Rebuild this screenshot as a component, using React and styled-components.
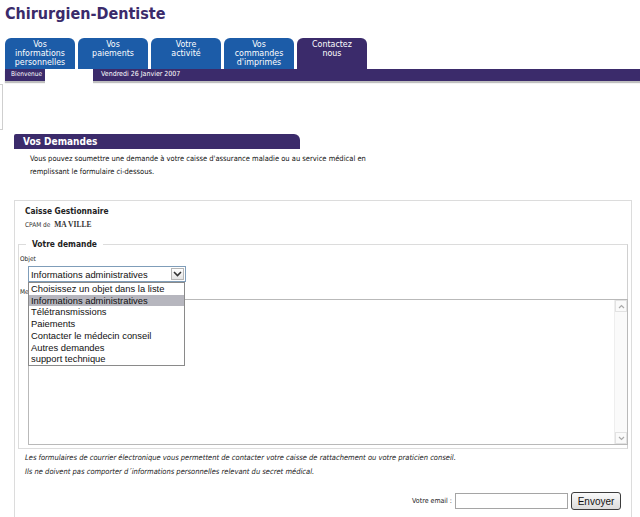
import React from "react";
import styled, { createGlobalStyle } from "styled-components";

const GlobalStyle = createGlobalStyle`
  html, body {
    margin: 0;
    padding: 0;
    background: #ffffff;
  }
  body {
    font-family: "DejaVu Sans Condensed", "DejaVu Sans", sans-serif;
    color: #222;
  }
`;

const tabs = [
  { label: ["Vos", "informations", "personnelles"], color: "#1c5ca8" },
  { label: ["Vos", "paiements"], color: "#1c5ca8" },
  { label: ["Votre", "activité"], color: "#1c5ca8" },
  { label: ["Vos", "commandes", "d'imprimés"], color: "#1c5ca8" },
  { label: ["Contactez", "nous"], color: "#3b2b6b" },
];

const options = [
  "Choisissez un objet dans la liste",
  "Informations administratives",
  "Télétransmissions",
  "Paiements",
  "Contacter le médecin conseil",
  "Autres demandes",
  "support technique",
];

const App = () => {
  return (
    <Page>
      <GlobalStyle />
      <Title>Chirurgien-Dentiste</Title>
      <TabRow>
        {tabs.map((tab, index) => (
          <Tab key={index} color={tab.color}>
            {tab.label.map((line, i) => (
              <span key={i}>{line}</span>
            ))}
          </Tab>
        ))}
      </TabRow>
      <NavBar>
        <Welcome>Bienvenue</Welcome>
        <WhiteSlot />
        <DateText>Vendredi 26 Janvier 2007</DateText>
      </NavBar>
      <SideBox />
      <Section>
        <SectionHeader>Vos Demandes</SectionHeader>
        <Intro>
          Vous pouvez soumettre une demande à votre caisse d'assurance maladie
          ou au service médical en
          <br />
          remplissant le formulaire ci-dessous.
        </Intro>
        <FormBox>
          <BoxTitle>Caisse Gestionnaire</BoxTitle>
          <Cpam>
            CPAM de <City>MA VILLE</City>
          </Cpam>
          <Fieldset>
            <Legend>Votre demande</Legend>
            <FieldLabel>Objet</FieldLabel>
            <SelectWrap>
              <SelectBox>
                <SelectValue>Informations administratives</SelectValue>
                <SelectArrow>
                  <svg width="9" height="6" viewBox="0 0 9 6">
                    <path
                      d="M1 1 L4.5 4.5 L8 1"
                      fill="none"
                      stroke="#333"
                      strokeWidth="1.6"
                    />
                  </svg>
                </SelectArrow>
              </SelectBox>
              <OptionList>
                {options.map((opt, i) => (
                  <OptionItem key={i} selected={i === 1}>
                    {opt}
                  </OptionItem>
                ))}
              </OptionList>
            </SelectWrap>
            <FieldLabel tight>Message</FieldLabel>
            <MessageArea>
              <ScrollTrack>
                <ScrollButton>
                  <svg width="7" height="5" viewBox="0 0 7 5">
                    <path d="M1 4 L3.5 1.5 L6 4" fill="none" stroke="#aaa" strokeWidth="1.2" />
                  </svg>
                </ScrollButton>
                <ScrollButton>
                  <svg width="7" height="5" viewBox="0 0 7 5">
                    <path d="M1 1 L3.5 3.5 L6 1" fill="none" stroke="#aaa" strokeWidth="1.2" />
                  </svg>
                </ScrollButton>
              </ScrollTrack>
            </MessageArea>
          </Fieldset>
          <Note>
            Les formulaires de courrier électronique vous permettent de
            contacter votre caisse de rattachement ou votre praticien conseil.
          </Note>
          <Note>
            Ils ne doivent pas comporter d´informations personnelles relevant
            du secret médical.
          </Note>
          <EmailRow>
            <EmailLabel>Votre email :</EmailLabel>
            <EmailInput />
            <SendButton>Envoyer</SendButton>
          </EmailRow>
        </FormBox>
      </Section>
    </Page>
  );
};

export default App;

const Page = styled.div`
  width: 640px;
  height: 517px;
  overflow: hidden;
  position: relative;
`;

const Title = styled.h1`
  margin: 0;
  padding: 4px 0 0 5px;
  height: 34px;
  box-sizing: border-box;
  font-family: "DejaVu Sans Condensed", "DejaVu Sans", sans-serif;
  font-size: 16px;
  font-weight: bold;
  color: #3b2b6b;
`;

const TabRow = styled.div`
  display: flex;
  gap: 3px;
  padding-left: 5px;
  margin-top: 4px;
`;

const Tab = styled.div`
  width: 70px;
  height: 31px;
  box-sizing: border-box;
  background: ${(p) => p.color};
  border-radius: 6px 6px 0 0;
  color: #ffffff;
  font-size: 8.8px;
  line-height: 9px;
  display: flex;
  flex-direction: column;
  align-items: center;
  padding-top: 2px;
  span {
    display: block;
    height: 9px;
  }
`;

const NavBar = styled.div`
  margin-left: 5px;
  height: 12px;
  background: #3b2b6b;
  display: flex;
  align-items: flex-start;
  box-shadow: 0 2px 1px rgba(0, 0, 0, 0.25);
  position: relative;
  z-index: 1;
`;

const Welcome = styled.div`
  margin-left: 6px;
  width: 34px;
  height: 11px;
  font-size: 6.5px;
  line-height: 11px;
  color: #ffffff;
`;

const WhiteSlot = styled.div`
  width: 48px;
  height: 15px;
  background: #ffffff;
`;

const DateText = styled.div`
  margin-left: 8px;
  font-size: 7px;
  line-height: 11px;
  color: #ffffff;
`;

const SideBox = styled.div`
  width: 2px;
  height: 44px;
  margin-top: 3px;
  border: 1px solid #cfcfcf;
  border-left: none;
`;

const Section = styled.div`
  margin-left: 14px;
  margin-top: 4px;
`;

const SectionHeader = styled.div`
  width: 286px;
  height: 15px;
  box-sizing: border-box;
  background: #3b2b6b;
  border-radius: 2px 6px 0 0;
  color: #ffffff;
  font-weight: bold;
  font-size: 10px;
  line-height: 15px;
  padding-left: 9px;
`;

const Intro = styled.p`
  margin: 3px 0 0 16px;
  font-size: 7.5px;
  line-height: 13px;
  color: #111;
`;

const FormBox = styled.div`
  margin-top: 22px;
  width: 618px;
  height: 340px;
  box-sizing: border-box;
  border: 1px solid #dcdcdc;
  padding: 4px 3px 0 3px;
`;

const BoxTitle = styled.div`
  padding-left: 7px;
  font-size: 8.3px;
  line-height: 12px;
  font-weight: bold;
  color: #222;
`;

const Cpam = styled.div`
  padding-left: 7px;
  margin-top: 2px;
  font-size: 6.5px;
  line-height: 12px;
  color: #333;
`;

const City = styled.span`
  font-family: "Liberation Serif", serif;
  font-weight: bold;
  font-size: 7.5px;
  font-variant: small-caps;
  margin-left: 2px;
`;

const Fieldset = styled.fieldset`
  margin: 8px 0 0 0;
  padding: 2px 0 3px 1px;
  border: 1px solid #dcdcdc;
  border-right-color: #d0d0d0;
  min-width: 0;
`;

const Legend = styled.legend`
  margin-left: 6px;
  padding: 0 6px;
  font-size: 8.4px;
  font-weight: bold;
  color: #222;
`;

const FieldLabel = styled.div`
  font-size: 6.5px;
  line-height: 8px;
  color: #222;
  margin-top: ${(p) => (p.tight ? "6px" : "4px")};
  margin-bottom: ${(p) => (p.tight ? "3px" : "3px")};
`;

const SelectWrap = styled.div`
  position: relative;
  margin-left: 8px;
  width: 158px;
  z-index: 2;
`;

const SelectBox = styled.div`
  height: 16px;
  box-sizing: border-box;
  border: 1px solid #7f9db9;
  background: #ffffff;
  display: flex;
  align-items: center;
`;

const SelectValue = styled.div`
  flex: 1;
  padding-left: 2px;
  font-family: "Liberation Sans", Arial, sans-serif;
  font-size: 9.4px;
  color: #111;
  white-space: nowrap;
`;

const SelectArrow = styled.div`
  width: 13px;
  height: 12px;
  margin-right: 1px;
  border: 1px solid #b5b5b5;
  box-sizing: border-box;
  background: linear-gradient(#ffffff, #e4e4e4);
  display: flex;
  align-items: center;
  justify-content: center;
`;

const OptionList = styled.div`
  position: absolute;
  top: 16px;
  left: 0;
  width: 157px;
  box-sizing: border-box;
  border: 1px solid #8a8a8a;
  background: #ffffff;
`;

const OptionItem = styled.div`
  font-family: "Liberation Sans", Arial, sans-serif;
  font-size: 9.4px;
  line-height: 11.7px;
  padding-left: 2px;
  color: #111;
  white-space: nowrap;
  background: ${(p) => (p.selected ? "#b6b6be" : "transparent")};
`;

const MessageArea = styled.div`
  margin-left: 8px;
  width: 600px;
  height: 146px;
  box-sizing: border-box;
  border: 1px solid #b9b9b9;
  background: #ffffff;
  display: flex;
  justify-content: flex-end;
`;

const ScrollTrack = styled.div`
  width: 12px;
  display: flex;
  flex-direction: column;
  justify-content: space-between;
  background: #fafafa;
  border-left: 1px solid #eeeeee;
`;

const ScrollButton = styled.div`
  height: 12px;
  border: 1px solid #e2e2e2;
  box-sizing: border-box;
  display: flex;
  align-items: center;
  justify-content: center;
`;

const Note = styled.div`
  padding-left: 7px;
  margin-top: 4px;
  font-size: 7.5px;
  line-height: 10px;
  font-style: italic;
  color: #222;
`;

const EmailRow = styled.div`
  display: flex;
  align-items: center;
  justify-content: flex-end;
  margin-top: 15px;
  padding-right: 7px;
`;

const EmailLabel = styled.span`
  font-size: 7px;
  color: #222;
  margin-right: 3px;
`;

const EmailInput = styled.div`
  width: 113px;
  height: 16px;
  box-sizing: border-box;
  border: 1px solid #a5a5a5;
  background: #ffffff;
`;

const SendButton = styled.button`
  margin-left: 3px;
  width: 50px;
  height: 18px;
  padding: 0;
  border: 1px solid #3c3c3c;
  border-radius: 3px;
  background: linear-gradient(#fafafa, #dcdcdc);
  font-family: "Liberation Sans", Arial, sans-serif;
  font-size: 10px;
  color: #111;
`;
